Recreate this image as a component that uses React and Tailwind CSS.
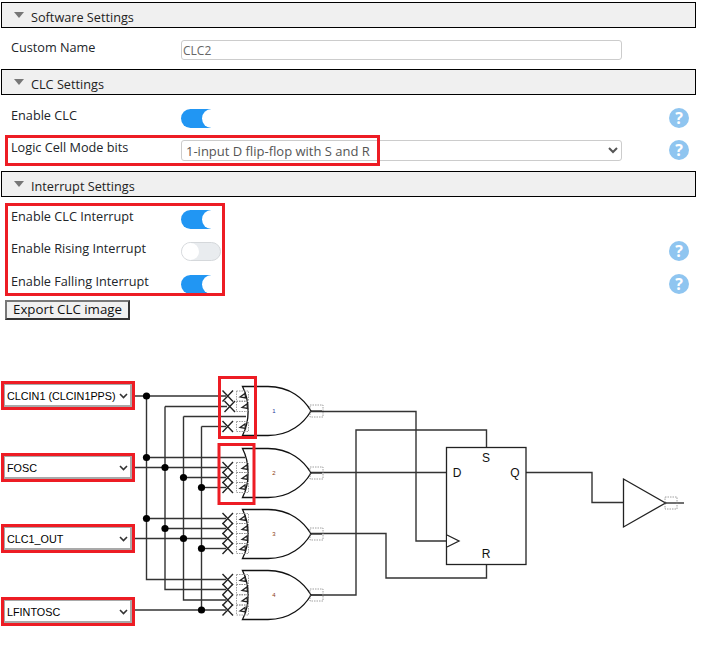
import React from 'react'

const font = { fontFamily: '"Open Sans", sans-serif' }

function SectionHeader({ title }) {
  return (
    <div className="ml-[1px] w-[695px] h-[26px] flex items-center bg-[#f0f0f0] border border-black">
      <span className="ml-[12px] w-0 h-0 border-x-[5px] border-x-transparent border-t-[6px] border-t-[#777]"></span>
      <span className="ml-[7px] mt-[5px] text-[12.7px] text-[#222]">{title}</span>
    </div>
  )
}

function Help() {
  return (
    <span className="absolute left-[669px] top-[6px] w-[20px] h-[20px] rounded-full bg-[#8fc5f0] flex items-center justify-center text-white text-[16px] font-bold">?</span>
  )
}

function Toggle({ on }) {
  if (!on) {
    return (
      <span className="relative block w-[40px] h-[19px] rounded-full bg-[#e9ecef] border border-[#d5d8db]">
        <span className="absolute left-0 top-0 w-[17px] h-[17px] rounded-full bg-white"></span>
      </span>
    )
  }
  return (
    <span className="relative flex w-[40px] h-[19px] rounded-full overflow-hidden bg-white">
      <span className="w-[30px] bg-[#2196f3]"></span>
      <span className="absolute left-[21px] top-0 w-[19px] h-[19px] rounded-full bg-white"></span>
    </span>
  )
}

function Row({ label, help, children }) {
  return (
    <div className="relative flex items-center h-[32px]">
      <div className="w-[181px] pl-[11px] -mt-[4px] text-[12.7px] text-[#212529]">{label}</div>
      {children}
      {help && <Help />}
    </div>
  )
}

const gates = [
  { top: 386.5, label: '1', color: '#2b3a9b', inputs: [396, 406.5, 416.5, 426.5], open: [0, 1, 3] },
  { top: 448.5, label: '2', color: '#8a3b12', inputs: [457.5, 467.5, 477.5, 487.5], open: [1, 2, 3] },
  { top: 509.5, label: '3', color: '#8a3b12', inputs: [518.5, 528.5, 538.5, 548.5], open: [0, 1, 2, 3] },
  { top: 570.5, label: '4', color: '#8a3b12', inputs: [579.5, 589.5, 600, 610], open: [0, 1, 2, 3] },
]

const wires = [
  'M132 396H226', 'M165 406.5H227', 'M183.5 416.5H246', 'M201.5 426.5H226',
  'M146.5 457.5H245', 'M132 467.5H226', 'M183.5 477.5H226', 'M201.5 487.5H226',
  'M146.5 518.5H226', 'M165 528.5H226', 'M132 538.5H226', 'M201.5 548.5H226',
  'M146.5 396V579.5H226', 'M165 406.5V589.5H226', 'M183.5 416.5V600H226', 'M201.5 426.5V610',
  'M132 610H226',
  'M311 411.5H416V541H447', 'M311 472.5H447', 'M311 533.5H386V578H486.5V564',
  'M311 595H356V430H486.5V448',
  'M526 472.5H592V502.5H623', 'M665 503H684',
]

const dots = [
  [146.5, 396], [146.5, 457.5], [165, 467.5], [183.5, 477.5], [201.5, 487.5],
  [146.5, 518.5], [165, 528.5], [183.5, 538.5], [201.5, 548.5], [201.5, 610],
]

function Gate({ top, label, color, inputs, open }) {
  const mid = top + 24.5
  return (
    <g>
      <path
        d={`M242.5 ${top}H268C290 ${top} 304 ${mid - 12} 311 ${mid}C304 ${mid + 12} 290 ${mid + 24.5} 268 ${mid + 24.5}H242.5C250 ${mid + 10} 250 ${mid - 10} 242.5 ${top}Z`}
        fill="#fff"
        stroke="#111"
        strokeWidth="1.3"
      />
      {open.map((i) => (
        <g key={i} stroke="#222" fill="none">
          <path d={`M${222.5 + (i === 1 && label === '1' ? 2 : 0)} ${inputs[i] - 5.5}l10.5 11m0 -11l-10.5 11`} strokeWidth="1.4" />
          <rect x="236.5" y={inputs[i] - 5} width="12" height="10" stroke="#888" strokeWidth="0.8" strokeDasharray="1.5 1" />
          <path d={`M${i === 0 || i === 3 ? 240 : 242} ${inputs[i] + 1}l5 -3.5l0.5 4.5z`} strokeWidth="1.3" fill="#fff" />
        </g>
      ))}
      <rect x="310" y={mid - 6} width="13" height="12" fill="none" stroke="#888" strokeWidth="0.8" strokeDasharray="1.5 1" />
      <path d={`M311 ${mid}H322`} stroke="#333" strokeWidth="1.3" />
      <text x="274" y={mid + 2} fontSize="6" fill={color} textAnchor="middle" fontFamily="Liberation Sans, sans-serif">{label}</text>
    </g>
  )
}

function Diagram() {
  return (
    <svg className="absolute inset-0" width="709" height="328" viewBox="0 320 709 328">
      <g fill="none" stroke="#333" strokeWidth="1.4">
        {wires.map((d) => <path key={d} d={d} />)}
      </g>
      {dots.map(([cx, cy]) => <circle key={`${cx}-${cy}`} cx={cx} cy={cy} r="3.6" fill="#000" />)}
      {gates.map((g) => <Gate key={g.label} {...g} />)}
      <rect x="219.5" y="377.5" width="36" height="60" fill="none" stroke="#ed1c24" strokeWidth="3" />
      <rect x="219" y="444.5" width="35" height="59" fill="none" stroke="#ed1c24" strokeWidth="3" />
      <g fill="#fff" stroke="#222" strokeWidth="1.3">
        <rect x="446.5" y="447.5" width="79.5" height="117" />
        <path d="M447 535L459 541L447 547" />
        <path d="M623.5 479L665.5 503L623.5 527Z" />
      </g>
      <rect x="665" y="497" width="12" height="12" fill="none" stroke="#888" strokeWidth="0.8" strokeDasharray="1.5 1" />
      <g fontSize="12" fontFamily="Liberation Sans, sans-serif" fill="#111" textAnchor="middle">
        <text x="457" y="477">D</text>
        <text x="486" y="462">S</text>
        <text x="486" y="558">R</text>
        <text x="515" y="477">Q</text>
      </g>
    </svg>
  )
}

function Chevron({ className }) {
  return (
    <svg className={`absolute pointer-events-none ${className}`} width="9" height="6" viewBox="0 0 9 6">
      <path d="M1 1L4.5 4.5L8 1" fill="none" stroke="#333" strokeWidth="1.6" />
    </svg>
  )
}

function PinSelect({ value, className }) {
  return (
    <div className={`relative w-[134px] h-[29px] border-[3px] border-[#ed1c24] ${className}`}>
      <select
        defaultValue={value}
        className="appearance-none block w-full h-full bg-white border border-r-2 border-b-2 border-[#a9a9a9] text-[10.8px] text-black pl-[2px] pt-[3px]"
        style={{ fontFamily: '"Liberation Sans", sans-serif' }}
      >
        <option>{value}</option>
      </select>
      <Chevron className="right-[4px] top-[9px]" />
    </div>
  )
}

export default function App() {
  return (
    <div className="w-[709px] h-[648px] overflow-hidden bg-white pt-[2px]" style={font}>
      <SectionHeader title="Software Settings" />
      <div className="pt-[6px] pb-[3px]">
        <Row label="Custom Name">
          <input
            defaultValue="CLC2"
            className="w-[441px] h-[20px] rounded-[3px] border border-[#ccc] px-[1px] text-[12px] text-[#666]"
          />
        </Row>
      </div>

      <SectionHeader title="CLC Settings" />
      <div className="relative pt-[7px] pb-[5px]">
        <Row label="Enable CLC" help><Toggle on /></Row>
        <Row label="Logic Cell Mode bits" help>
          <select className="w-[441px] h-[21px] rounded-[3px] border border-[#ccc] text-[13px] text-[#555]">
            <option>1-input D flip-flop with S and R</option>
          </select>
        </Row>
        <div className="absolute left-[5px] top-[40px] w-[375px] h-[31px] border-[3px] border-[#ed1c24] pointer-events-none"></div>
      </div>

      <SectionHeader title="Interrupt Settings" />
      <div className="relative pt-[6px]">
        <Row label="Enable CLC Interrupt"><Toggle on /></Row>
        <Row label="Enable Rising Interrupt" help><Toggle /></Row>
        <div className="pt-[1px]">
          <Row label="Enable Falling Interrupt" help><Toggle on /></Row>
        </div>
        <div className="absolute left-[5px] top-[6px] w-[220px] h-[93px] border-[3px] border-[#ed1c24] pointer-events-none"></div>
      </div>

      <button className="block ml-[5px] w-[125px] h-[20px] bg-[#f0f0f0] border-2 border-t-[#777] border-l-[#777] border-r-[#333] border-b-[#333] text-[13.3px] leading-none text-[#111]">
        Export CLC image
      </button>

      <div className="relative h-[328px]">
        <Diagram />
        <div className="relative flex flex-col ml-[1px]">
          <PinSelect value="CLCIN1 (CLCIN1PPS)" className="mt-[61px]" />
          <PinSelect value="FOSC" className="mt-[43px]" />
          <PinSelect value="CLC1_OUT" className="mt-[42px]" />
          <PinSelect value="LFINTOSC" className="mt-[44px]" />
        </div>
      </div>
    </div>
  )
}
